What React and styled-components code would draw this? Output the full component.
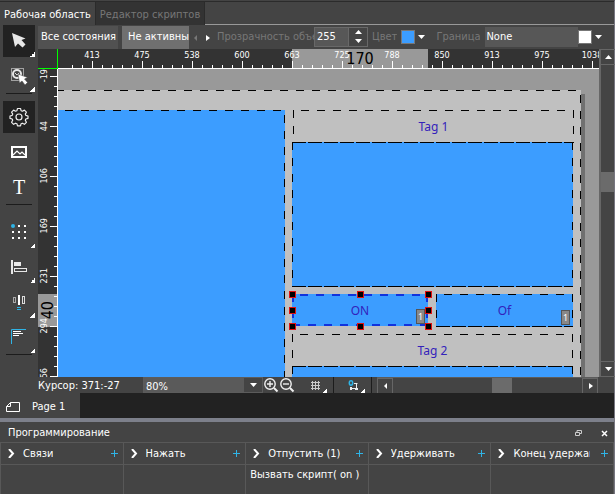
import React from 'react';
import styled, { createGlobalStyle } from 'styled-components';

const hMarks = [413, 475, 538, 600, 663, 725, 788, 850, 913, 975, 1038];
const vMarks = [-19, 44, 106, 169, 231, 294, 356];

const columns = [
  { title: 'Связи', items: [] },
  { title: 'Нажать', items: [] },
  { title: 'Отпустить (1)', items: ['Вызвать скрипт( on )'] },
  { title: 'Удерживать', items: [] },
  { title: 'Конец удержания', items: [] },
];

const handles = [
  [0, 0], [50, 0], [100, 0],
  [0, 50], [100, 50],
  [0, 100], [50, 100], [100, 100],
];

const Icon = ({ size = 24, children }) => (
  <svg width={size} height={size} viewBox={`0 0 ${size} ${size}`} fill="none" aria-hidden="true">
    {children}
  </svg>
);

const Triangle = ({ dir = 'down', color = '#fff' }) => {
  const shapes = {
    down: 'M1 2h7L4.5 6z',
    up: 'M1 6h7L4.5 2z',
    left: 'M6 2v6L3 5z',
    right: 'M3 2v6l4-3z',
  };
  return (
    <Icon size={9}>
      <path d={shapes[dir]} fill={color} />
    </Icon>
  );
};

const CursorIcon = () => (
  <Icon>
    <path d="M5 4l3 14 3-3.500 4.500 4 3-3-4-4.500 4-1.500z" fill="#e8e8e8" />
  </Icon>
);

const RegionIcon = () => (
  <Icon>
    <rect x="4.500" y="4.500" width="12" height="12" stroke="#fff" strokeDasharray="1 1" />
    <circle cx="10" cy="10" r="4" stroke="#e8e8e8" strokeWidth="2" />
    <path d="M8 9l2 2 2-2" stroke="#ddd" />
    <path d="M11 10l1.500 9 2.500-2 3 4 2.500-2.500-3-3.500 3-1.500z" fill="#fff" stroke="#444" strokeWidth=".5" />
  </Icon>
);

const GearIcon = () => (
  <Icon>
    <path
      d="M10.500 4.500h3l.6 2.200 1.300.5 2-1.100 2 2-1.100 2 .5 1.300 2.200.6v2.400l-2.200.6-.5 1.300 1.100 2-2 2-2-1.100-1.300.5-.6 2.200h-3l-.6-2.200-1.300-.5-2 1.100-2-2 1.100-2-.5-1.300-2.200-.6V12l2.200-.6.5-1.300-1.100-2 2-2 2 1.100 1.300-.5z"
      transform="translate(0 -1)"
      stroke="#eee"
      strokeWidth="1.200"
      strokeLinejoin="round"
    />
    <circle cx="12" cy="12" r="3" stroke="#eee" strokeWidth="1.200" />
  </Icon>
);

const ImageIcon = () => (
  <Icon>
    <rect x="5" y="7" width="14" height="10" stroke="#fff" strokeWidth="2" />
    <path d="M6 15l4-4 3 3 2-2 3 3" stroke="#fff" strokeWidth="1.200" />
  </Icon>
);

const GridDotsIcon = () => (
  <Icon>
    {[5, 11, 17].map((y) =>
      [5, 11, 17].map((x) => <rect key={`${x}-${y}`} x={x} y={y} width="2" height="2" fill="#fff" />)
    )}
    <circle cx="6" cy="6" r="2" fill="#2fb4e6" />
  </Icon>
);

const AlignIcon = () => (
  <Icon>
    <path d="M4 5h2v14H4zM7 7h7v4H7z" fill="#e8e8e8" />
    <rect x="7.500" y="13.500" width="12" height="3" stroke="#e8e8e8" />
  </Icon>
);

const DistributeIcon = () => (
  <Icon>
    <rect x="6.500" y="7.500" width="2" height="5" stroke="#aaa" />
    <rect x="15.500" y="6.500" width="2" height="7" stroke="#ddd" />
    <path d="M11 5h2v10h-2z" fill="#fff" />
    <path d="M10 17h4v1h-4zM10 19h4v1h-4z" fill="#2fb4e6" />
  </Icon>
);

const TextLinesIcon = () => (
  <Icon>
    <path d="M4.500 19V4.500H19" stroke="#2fb4e6" />
    <path d="M6 6h8v1H6zM6 8h10v1H6zM6 10h6v1H6z" fill="#fff" />
  </Icon>
);

const Magnifier = ({ plus }) => (
  <Icon size={16}>
    <circle cx="7" cy="7" r="5.200" stroke="#f0f0f0" strokeWidth="1.400" />
    <path d="M11 11l3.500 3.500" stroke="#f0f0f0" strokeWidth="2" />
    <path d={plus ? 'M4 7h6M7 4v6' : 'M4 7h6'} stroke="#f0f0f0" strokeWidth="1.400" />
  </Icon>
);

const HashIcon = () => (
  <Icon size={16}>
    <path d="M5.500 4v9M8.500 4v9M11.500 4v9M4 5.500h9M4 8.500h9M4 11.500h9" stroke="#ccc" />
  </Icon>
);

const SnapIcon = () => (
  <Icon size={16}>
    <ellipse cx="6" cy="6" rx="1.700" ry="2.200" stroke="#2fb4e6" strokeWidth="1.500" />
    <path d="M9 6.500h3.500M11.500 6v5" stroke="#eee" />
    <path d="M5 10h2v3H5zM10 11h3v2h-3z" fill="#eee" />
    <path d="M7 11.500h3" stroke="#eee" />
  </Icon>
);

const tools = [
  [
    { label: 'Выбор', icon: <CursorIcon />, active: true, more: true },
    { label: 'Область', icon: <RegionIcon />, more: true },
  ],
  [
    { label: 'Настройки', icon: <GearIcon />, active: true },
    { label: 'Изображение', icon: <ImageIcon /> },
    { label: 'Текст', glyph: 'T' },
  ],
  [
    { label: 'Сетка', icon: <GridDotsIcon />, more: true },
    { label: 'Выравнивание', icon: <AlignIcon />, more: true },
    { label: 'Распределение', icon: <DistributeIcon />, more: true },
    { label: 'Строки', icon: <TextLinesIcon />, more: true },
  ],
];

const Ruler = ({ vertical, marks, size, from, length }) => (
  <RulerTrack $vertical={vertical}>
    <RulerRange $vertical={vertical} $from={from} $length={length} />
    <Marks $vertical={vertical}>
      {marks.map((mark) => (
        <Mark key={mark} $vertical={vertical}>
          {mark}
        </Mark>
      ))}
    </Marks>
    <RangeSize $vertical={vertical} $from={from} $length={length}>
      {size}
    </RangeSize>
  </RulerTrack>
);

const App = () => (
  <Window>
    <GlobalStyle />
    <TabRow>
      <Tab $active>Рабочая область</Tab>
      <Tab>Редактор скриптов</Tab>
      <TabFill />
    </TabRow>

    <Main>
      <ToolColumn>
        {tools.map((group, i) => (
          <ToolGroup key={i} $index={i}>
            {group.map(({ label, icon, glyph, active, more }) => (
              <ToolButton key={label} aria-label={label} $active={active} $more={more}>
                {icon || <TextGlyph>{glyph}</TextGlyph>}
              </ToolButton>
            ))}
          </ToolGroup>
        ))}
      </ToolColumn>

      <Workspace>
        <OptionBar>
          <StateButton>Все состояния</StateButton>
          <StateButton $active>Не активный</StateButton>
          <ArrowButton aria-label="Назад">
            <Triangle dir="left" color="#777" />
          </ArrowButton>
          <ArrowButton aria-label="Вперёд">
            <Triangle dir="right" />
          </ArrowButton>
          <OpacityLabel htmlFor="opacity">Прозрачность объекта</OpacityLabel>
          <Spinner>
            <SpinnerInput id="opacity" defaultValue="255" />
            <SpinnerButtons>
              <SpinnerButton aria-label="Больше">
                <Triangle dir="up" />
              </SpinnerButton>
              <SpinnerButton aria-label="Меньше">
                <Triangle />
              </SpinnerButton>
            </SpinnerButtons>
          </Spinner>
          <OptionLabel as="span">Цвет</OptionLabel>
          <ColorButton aria-label="Цвет" $gap={4}>
            <Swatch $color="#3c9dff" />
            <Triangle />
          </ColorButton>
          <BorderLabel htmlFor="border">Граница</BorderLabel>
          <BorderSelect id="border" defaultValue="None">
            <option>None</option>
          </BorderSelect>
          <ColorButton aria-label="Цвет границы">
            <Swatch $color="#fff" />
            <Triangle />
          </ColorButton>
        </OptionBar>

        <Stage>
          <Corner />
          <Ruler marks={hMarks} size="170" from={234} length={136} />
          <VScroll>
            <ScrollButton aria-label="Вверх">
              <Triangle dir="up" />
            </ScrollButton>
            <VTrack>
              <VThumb />
            </VTrack>
            <ScrollButton aria-label="Вниз">
              <Triangle />
            </ScrollButton>
          </VScroll>
          <Ruler vertical marks={vMarks} size="40" from={225} length={33} />
          <Canvas>
            <Shadow />
            <Shape $x={-34} $y={21} $w={557} $h={400} $fill="#c0c0c0" $phaseY={5} />
            <Shape $x={-25} $y={41} $w={252} $h={400} $phaseY={5} />
            <Shape $x={235} $y={41} $w={281} $h={33} $fill="none" $phaseX={8}>
              Tag 1
            </Shape>
            <Shape $x={234} $y={73} $w={281} $h={145} $dense />
            <Shape $x={234} $y={225} $w={136} $h={32} $line="#1133dd" $phaseX={8}>
              ON
              <Badge>1</Badge>
              {handles.map(([x, y]) => (
                <Handle key={`${x}-${y}`} $x={x} $y={y} />
              ))}
            </Shape>
            <Shape $x={378} $y={225} $w={137} $h={33} $phaseX={8}>
              Of
              <Badge>1</Badge>
            </Shape>
            <Shape $x={234} $y={265} $w={281} $h={33} $fill="none" $phaseX={8}>
              Tag 2
            </Shape>
            <Shape $x={234} $y={297} $w={281} $h={145} $dense />
          </Canvas>
        </Stage>

        <StatusBar>
          <CursorInfo>Курсор: 371:-27</CursorInfo>
          <ZoomBox>
            <ZoomSelect aria-label="Масштаб" defaultValue="80%">
              <option>80%</option>
            </ZoomSelect>
            <ZoomArrow>
              <Triangle />
            </ZoomArrow>
          </ZoomBox>
          <StatusButton aria-label="Увеличить">
            <Magnifier plus />
          </StatusButton>
          <StatusButton aria-label="Уменьшить">
            <Magnifier />
          </StatusButton>
          <StatusMenu aria-label="Сетка">
            <HashIcon />
          </StatusMenu>
          <StatusMenu aria-label="Привязка">
            <SnapIcon />
          </StatusMenu>
          <HScroll>
            <ScrollButton aria-label="Влево">
              <Triangle dir="left" />
            </ScrollButton>
            <HTrack>
              <HThumb />
            </HTrack>
            <ScrollButton aria-label="Вправо">
              <Triangle dir="right" />
            </ScrollButton>
          </HScroll>
        </StatusBar>
      </Workspace>
    </Main>

    <PageRow>
      <PageTab>
        <Icon size={16}>
          <path d="M5.500 3.500h9v9h-13v-5z" stroke="#fff" />
          <path d="M5.500 3.500v4h-4" stroke="#fff" />
        </Icon>
        Page 1
      </PageTab>
    </PageRow>

    <Panel>
      <PanelHeader>
        <PanelTitle>Программирование</PanelTitle>
        <PanelButton aria-label="Открепить">
          <Icon size={9}>
            <path d="M3 3V1.500h4.500v3H6M1.500 3.500h4v3h-4z" stroke="#ccc" />
          </Icon>
        </PanelButton>
        <PanelButton aria-label="Закрыть">
          <Icon size={9}>
            <path d="M2 2l5 5M7 2L2 7" stroke="#fff" strokeWidth="1.500" />
          </Icon>
        </PanelButton>
      </PanelHeader>
      <Columns>
        {columns.map(({ title, items }) => (
          <Column key={title}>
            <ColumnHeader>
              <ColumnToggle>
                <Icon size={9}>
                  <path d="M2 0l4 4.500L2 9" stroke="#fff" strokeWidth="2" />
                </Icon>
                <ColumnTitle>{title}</ColumnTitle>
              </ColumnToggle>
              <AddButton aria-label={`Добавить: ${title}`}>
                <Icon size={9}>
                  <path d="M1 4.500h7M4.500 1v7" stroke="#2fb4e6" />
                </Icon>
              </AddButton>
            </ColumnHeader>
            {items.map((item) => (
              <ColumnItem key={item}>{item}</ColumnItem>
            ))}
          </Column>
        ))}
      </Columns>
    </Panel>
  </Window>
);

export default App;

const GlobalStyle = createGlobalStyle`
  * {
    box-sizing: border-box;
  }
  body {
    margin: 0;
    background: #444;
  }
  body, button, input, select {
    font-family: 'DejaVu Sans Condensed', 'Noto Sans', sans-serif;
    font-size: 11px;
    line-height: 14px;
    color: #fff;
  }
  button {
    margin: 0;
    padding: 0;
    border: 0;
    background: none;
    white-space: nowrap;
  }
  svg {
    display: block;
    flex: none;
  }
`;

const Window = styled.div`
  display: flex;
  flex-direction: column;
  min-height: 100vh;
  border-top: 1px solid #444;
  border-right: 1px solid #777680;
`;

const TabRow = styled.div`
  display: flex;
  height: 24px;
  border-top: 1px solid #2b2b2b;
`;

const Tab = styled.button`
  padding: 2px 4px 0;
  border-right: 1px solid #2b2b2b;
  background: ${(props) => (props.$active ? '#444' : '#333')};
  color: ${(props) => (props.$active ? '#fff' : '#777')};
`;

const TabFill = styled.div`
  flex: 1;
  border-bottom: 1px solid #999;
`;

const Main = styled.div`
  display: flex;
  flex: 1;
`;

const ToolColumn = styled.div`
  width: 38px;
  padding: 0 3px;
`;

const ToolGroup = styled.div`
  display: flex;
  flex-direction: column;
  gap: 3px;
  margin-bottom: 1px;
  padding: ${(props) => [0, 6, 10][props.$index]}px 0 2px;
  background: linear-gradient(#1c1c1c, #1c1c1c) center bottom / 26px 1px no-repeat;
`;

const ToolButton = styled.button`
  display: flex;
  align-items: center;
  justify-content: center;
  width: 32px;
  height: 32px;
  background:
    ${(props) => (props.$more ? 'linear-gradient(135deg, transparent 50%, #fff 50%) right bottom / 5px 5px no-repeat,' : '')}
    ${(props) => (props.$active ? '#222' : '#444')};
`;

const TextGlyph = styled.span`
  font: 20px/24px 'Liberation Serif', serif;
`;

const Workspace = styled.div`
  display: flex;
  flex: 1;
  flex-direction: column;
  min-width: 0;
`;

const OptionBar = styled.div`
  display: flex;
  align-items: center;
  height: 24px;
  padding-right: 11px;
`;

const StateButton = styled.button`
  width: ${(props) => (props.$active ? 67 : 80)}px;
  height: 23px;
  margin-right: ${(props) => (props.$active ? 0 : 4)}px;
  padding-left: ${(props) => (props.$active ? 6 : 3)}px;
  overflow: hidden;
  background: ${(props) => (props.$active ? '#707070' : '#515151')};
  text-align: left;
`;

const ArrowButton = styled.button`
  width: 12px;
  padding-left: 2px;
`;

const OptionLabel = styled.label`
  overflow: hidden;
  color: #777;
  white-space: nowrap;
`;

const OpacityLabel = styled(OptionLabel)`
  width: 97px;
  margin-left: 4px;
`;

const BorderLabel = styled(OptionLabel)`
  margin: 0 5px 0 10px;
`;

const Spinner = styled.div`
  display: flex;
  height: 20px;
  margin-right: 4px;
  border: 1px solid #686868;
`;

const SpinnerInput = styled.input`
  width: 34px;
  padding: 0 2px;
  border: 0;
  border-right: 1px solid #686868;
  background: #575757;
`;

const SpinnerButtons = styled.div`
  display: flex;
  flex-direction: column;
`;

const SpinnerButton = styled.button`
  width: 18px;
  height: 9px;
  padding-left: 5px;
`;

const ColorButton = styled.button`
  display: flex;
  align-items: center;
  gap: 2px;
  margin-left: ${(props) => props.$gap || 0}px;
`;

const Swatch = styled.span`
  width: 14px;
  height: 14px;
  border: 1px solid #777;
  background: ${(props) => props.$color};
`;

const BorderSelect = styled.select`
  appearance: none;
  flex: 1;
  min-width: 0;
  height: 20px;
  padding: 0 1px;
  border: 0;
  border-radius: 0;
  background: #575757;
`;

const Stage = styled.div`
  display: grid;
  flex: 1;
  grid-template-columns: 20px minmax(0, 1fr) 15px;
  grid-template-rows: 20px minmax(0, 1fr);
`;

const Corner = styled.div`
  border-right: 1px solid #0f0;
  border-bottom: 1px solid #0f0;
  background: #333;
`;

const RulerTrack = styled.div`
  position: relative;
  overflow: hidden;
  background: #333;
  border: 0 solid #fff;
  border-width: ${(props) => (props.$vertical ? '0 1px 0 0' : '0 0 1px')};
`;

const RulerRange = styled.div`
  position: absolute;
  ${(props) =>
    props.$vertical
      ? `top: ${props.$from}px; height: ${props.$length}px; left: 0; right: 0;`
      : `left: ${props.$from}px; width: ${props.$length}px; top: 0; bottom: 0;`}
  background: #999;
`;

const RangeSize = styled(RulerRange)`
  display: flex;
  align-items: center;
  justify-content: center;
  background: none;
  color: #000;
  font-size: 16px;
  writing-mode: ${(props) => (props.$vertical ? 'sideways-lr' : 'horizontal-tb')};
`;

const Marks = styled.div`
  position: absolute;
  display: flex;
  flex-direction: ${(props) => (props.$vertical ? 'column' : 'row')};
  top: ${(props) => (props.$vertical ? '-18px' : 0)};
  bottom: 0;
  left: ${(props) => (props.$vertical ? 0 : '9px')};
  right: 0;
`;

const Mark = styled.div`
  flex: none;
  font-size: 9px;
  line-height: 12px;
  text-align: center;
  ${(props) =>
    props.$vertical
      ? `
    writing-mode: sideways-lr;
    height: 50px;
    background:
      linear-gradient(#fff, #fff) right 25px / 7px 1px no-repeat,
      repeating-linear-gradient(transparent 0 5px, #fff 5px 6px, transparent 6px 10px) right top / 3px 100% no-repeat;
  `
      : `
    width: 50px;
    background:
      linear-gradient(#fff, #fff) 25px bottom / 1px 7px no-repeat,
      repeating-linear-gradient(90deg, transparent 0 5px, #fff 5px 6px, transparent 6px 10px) left bottom / 100% 3px no-repeat;
  `}
`;

const Canvas = styled.div`
  position: relative;
  overflow: hidden;
  background: #999;
`;

const Shadow = styled.div`
  position: absolute;
  top: 25px;
  left: 0;
  width: 527px;
  height: 400px;
  background: #707070;
`;

const Shape = styled.div`
  --line: ${(props) => props.$line || '#000'};
  --dash: ${(props) => (props.$dense ? 14 : 8)}px;
  --bottom-dash: ${(props) => (props.$line ? 8 : 14)}px;
  --weight: ${(props) => (props.$line ? 2 : 1)}px;
  position: absolute;
  display: flex;
  align-items: center;
  justify-content: center;
  left: ${(props) => props.$x}px;
  top: ${(props) => props.$y}px;
  width: ${(props) => props.$w}px;
  height: ${(props) => props.$h}px;
  padding-top: 1px;
  color: #3322bb;
  font-family: 'Noto Sans', sans-serif;
  font-size: 12px;
  background:
    repeating-linear-gradient(90deg, var(--line) 0 var(--dash), transparent var(--dash) 16px) ${(props) => props.$phaseX || 0}px top / 1600px var(--weight) no-repeat,
    repeating-linear-gradient(90deg, var(--line) 0 var(--bottom-dash), transparent var(--bottom-dash) 16px) 0 bottom / 1600px var(--weight) no-repeat,
    repeating-linear-gradient(var(--line) 0 8px, transparent 8px 16px) left ${(props) => props.$phaseY || 0}px / var(--weight) 1600px no-repeat,
    repeating-linear-gradient(var(--line) 0 8px, transparent 8px 16px) right ${(props) => props.$phaseY || 0}px / var(--weight) 1600px no-repeat,
    ${(props) => props.$fill || '#3c9dff'};
`;

const Badge = styled.span`
  position: absolute;
  right: 3px;
  bottom: 2px;
  width: 9px;
  height: 15px;
  border: 1px solid #555;
  background: #888;
  color: #fff;
  font-size: 9px;
  line-height: 13px;
  text-align: center;
`;

const Handle = styled.span`
  position: absolute;
  left: ${(props) => props.$x}%;
  top: ${(props) => props.$y}%;
  width: 7px;
  height: 7px;
  margin: -3px;
  border: 1px solid #e01010;
  background: #000;
`;

const VScroll = styled.div`
  display: flex;
  flex-direction: column;
  grid-row: 1 / 3;
  grid-column: 3;
  border-left: 1px solid #666;
`;

const ScrollButton = styled.button`
  display: flex;
  flex: none;
  align-items: center;
  justify-content: center;
  width: 16px;
  height: 16px;
  border: 1px solid #666;
`;

const VTrack = styled.div`
  flex: 1;
  padding-top: 107px;
  border-left: 1px solid #666;
`;

const VThumb = styled.div`
  height: 20px;
  background: #6b6b6b;
`;

const StatusBar = styled.div`
  display: flex;
  align-items: center;
  height: 16px;
`;

const CursorInfo = styled.span`
  width: 105px;
  padding-top: 2px;
  white-space: nowrap;
`;

const ZoomBox = styled.div`
  display: flex;
  width: 120px;
  height: 16px;
  border: 1px solid #5c5c5c;
`;

const ZoomSelect = styled.select`
  appearance: none;
  flex: 1;
  padding: 2px 2px 0;
  border: 0;
  border-radius: 0;
  background: #5a5a5a;
`;

const ZoomArrow = styled.span`
  display: flex;
  align-items: center;
  justify-content: center;
  width: 18px;
`;

const StatusButton = styled.button`
  width: 16px;
`;

const StatusMenu = styled.button`
  width: 38px;
  height: 16px;
  padding-left: 12px;
  border-right: 6px solid #444;
  background:
    linear-gradient(135deg, transparent 50%, #fff 50%) right bottom / 4px 4px no-repeat;
  box-shadow: 1px 0 #1c1c1c;
`;

const HScroll = styled.div`
  display: flex;
  flex: 1;
  margin: 0 16px 0 6px;
  border-top: 1px solid #5c5c5c;
`;

const HTrack = styled.div`
  display: flex;
  flex: 1;
  justify-content: flex-end;
  padding-right: 70px;
`;

const HThumb = styled.div`
  width: 20px;
  background: #6b6b6b;
`;

const PageRow = styled.div`
  display: flex;
  height: 25px;
  background: #222;
`;

const PageTab = styled.button`
  display: flex;
  align-items: center;
  gap: 11px;
  width: 80px;
  padding: 3px 5px 0;
  background: #444;
`;

const Panel = styled.section`
  border-top: 4px solid #7d808b;
`;

const PanelHeader = styled.header`
  display: flex;
  align-items: center;
  gap: 17px;
  height: 20px;
  padding: 2px 5px 0 8px;
`;

const PanelTitle = styled.span`
  flex: 1;
`;

const PanelButton = styled.button`
  width: 9px;
`;

const Columns = styled.div`
  display: grid;
  grid-template-columns: repeat(5, minmax(0, 1fr));
  height: 52px;
  border-right: 1px solid #585858;
`;

const Column = styled.div`
  border: 1px solid #585858;
  border-width: 1px 0 0 1px;
`;

const ColumnHeader = styled.div`
  display: flex;
  align-items: center;
  height: 22px;
  padding: 0 4px 0 6px;
  border-bottom: 1px solid #585858;
`;

const ColumnToggle = styled.button`
  display: flex;
  flex: 1;
  align-items: center;
  gap: 7px;
  min-width: 0;
  margin-right: 10px;
  overflow: hidden;
`;

const ColumnTitle = styled.span`
  overflow: hidden;
`;

const AddButton = styled.button`
  width: 9px;
`;

const ColumnItem = styled.div`
  padding: 3px 4px;
  white-space: nowrap;
`;
